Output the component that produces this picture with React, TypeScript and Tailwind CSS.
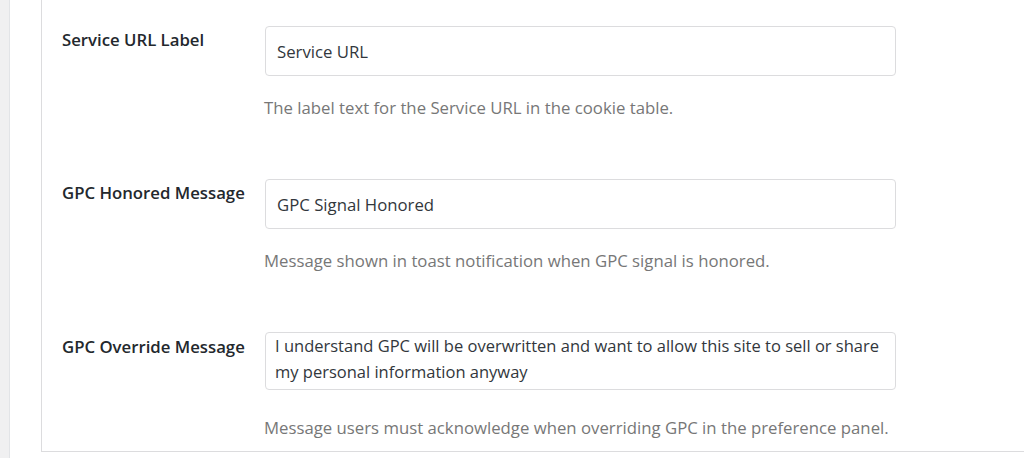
const rows = [
  {
    label: "Service URL Label",
    value: "Service URL",
    help: "The label text for the Service URL in the cookie table.",
  },
  {
    label: "GPC Honored Message",
    value: "GPC Signal Honored",
    help: "Message shown in toast notification when GPC signal is honored.",
  },
];

export default function App() {
  return (
    <div
      className="flex h-[458px] w-[1024px] overflow-hidden bg-white"
      style={{ fontFamily: '"Open Sans", sans-serif' }}
    >
      {/* sidebar edge */}
      <div className="w-[10px] shrink-0 bg-[#f0f0f1] border-r border-[#e2e4e7]" />
      <div className="w-[31px] shrink-0" />

      {/* settings card */}
      <div className="flex h-[452px] flex-1 flex-col border-l border-b border-[#dcdcde] pl-5 pt-[26px]">
        {rows.map((row) => (
          <div key={row.label} className="flex h-[153px]">
            <div className="w-[203px] shrink-0 pt-[4px] text-[16.75px] leading-5 font-semibold text-[#23282d]">
              {row.label}
            </div>
            <div className="flex flex-col">
              <div className="flex h-[50px] w-[631px] items-center rounded border border-[#dcdcde] px-[11px] pt-[1px] text-[16.75px] text-[#32373c]">
                {row.value}
              </div>
              <p className="mt-[22px] -ml-px text-[16.75px] leading-5 text-[#777777]">{row.help}</p>
            </div>
          </div>
        ))}

        <div className="flex">
          <div className="w-[203px] shrink-0 pt-[5px] text-[16.75px] leading-5 font-semibold text-[#23282d]">
            GPC Override Message
          </div>
          <div className="flex flex-col">
            <div className="h-[58px] w-[631px] whitespace-nowrap rounded border border-[#dcdcde] px-[9px] text-[16.5px] leading-[26px] text-[#32373c]">
              I understand GPC will be overwritten and want to allow this site to sell or share
              <br />
              my personal information anyway
            </div>
            <p className="mt-[28px] -ml-px text-[16.75px] leading-5 text-[#777777]">
              Message users must acknowledge when overriding GPC in the preference panel.
            </p>
          </div>
        </div>
      </div>
    </div>
  );
}
